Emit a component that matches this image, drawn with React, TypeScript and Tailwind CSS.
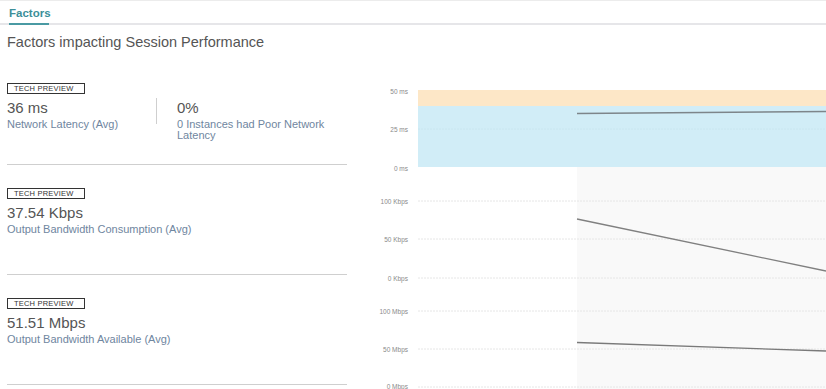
import React from 'react';

const font = { fontFamily: '"Liberation Sans", Arial, sans-serif' };

interface Metric {
  value: string;
  label: string;
}

const TechBadge = () => (
  <div className="w-[78px] h-[11px] border border-[#333] flex items-center pl-[6px] text-[7.5px] leading-none text-[#333] tracking-[0.2px]">
    TECH PREVIEW
  </div>
);

const MetricBlock = ({ value, label }: Metric) => (
  <div className="flex flex-col">
    <div className="text-[15px] leading-[18px] text-[#555] mt-[5px]">{value}</div>
    <div className="text-[11px] leading-[11px] text-[#6f86a0] mt-[2px]">{label}</div>
  </div>
);

const Section = ({ children, first }: { children: React.ReactNode; first?: boolean }) => (
  <div className={`${first ? 'h-[106px] pt-[24px]' : 'h-[110px] pt-[23px]'} border-b border-[#cfcfcf] flex flex-col`}>
    <TechBadge />
    {children}
  </div>
);

const Chart = () => {
  const axis = (y: number, text: string) => (
    <text x={408} y={y + 2.5} textAnchor="end" fontSize="6.5" fill="#8a8a8a" fontFamily="Liberation Sans, Arial, sans-serif">
      {text}
    </text>
  );
  const grid = (y: number) => (
    <line x1={418} x2={826} y1={y} y2={y} stroke="#e6e6e6" strokeWidth="1" strokeDasharray="2 1" />
  );
  return (
    <svg width="471" height="309" viewBox="355 80 471 309" className="block">
      <rect x={577} y={167} width={249} height={222} fill="#f9f9f9" />
      <rect x={418} y={90} width={408} height={16} fill="#fde7c7" />
      <rect x={418} y={106} width={408} height={61} fill="#d1edf7" />
      <line x1={418} x2={826} y1={129} y2={129} stroke="#c9e6f0" strokeWidth="1" strokeDasharray="2 1" />
      <line x1={577} y1={113.5} x2={826} y2={111.5} stroke="#7d858a" strokeWidth="1.5" />
      {axis(91, '50 ms')}
      {axis(129, '25 ms')}
      {axis(168, '0 ms')}

      {grid(201)}
      {grid(239)}
      {grid(278)}
      {axis(201, '100 Kbps')}
      {axis(239, '50 Kbps')}
      {axis(278, '0 Kbps')}
      <line x1={577} y1={219} x2={826} y2={271} stroke="#808080" strokeWidth="1.3" />

      {grid(311)}
      {grid(349)}
      {grid(387)}
      {axis(311, '100 Mbps')}
      {axis(349, '50 Mbps')}
      {axis(386.5, '0 Mbps')}
      <line x1={577} y1={342.5} x2={826} y2={351} stroke="#7a7a7a" strokeWidth="1.3" />
    </svg>
  );
};

export default function App() {
  return (
    <div className="w-[826px] h-[389px] bg-white overflow-hidden border-t border-[#ececec]" style={font}>
      <div className="h-[24px] border-b-2 border-[#e6e6e9] flex">
        <div className="ml-[9px] w-[40px] border-b-2 border-[#4a9aa3] -mb-[2px] text-[11.5px] font-bold text-[#3c8f99] pt-[5px] leading-[14px]">
          Factors
        </div>
      </div>
      <div className="pl-[7px] pt-[8px] text-[14.5px] leading-[18px] text-[#555]">Factors impacting Session Performance</div>
      <div className="flex mt-[8px]">
        <div className="w-[347px] pl-[7px] shrink-0">
          <Section first>
            <div className="flex">
              <div className="w-[149px]">
                <MetricBlock value="36 ms" label="Network Latency (Avg)" />
              </div>
              <div className="w-px h-[26px] bg-[#cfcfcf] mt-[4px]" />
              <div className="pl-[20px] w-[170px]">
                <MetricBlock value="0%" label="0 Instances had Poor Network Latency" />
              </div>
            </div>
          </Section>
          <Section>
            <MetricBlock value="37.54 Kbps" label="Output Bandwidth Consumption (Avg)" />
          </Section>
          <Section>
            <MetricBlock value="51.51 Mbps" label="Output Bandwidth Available (Avg)" />
          </Section>
        </div>
        <div className="ml-[8px] mt-[21px]">
          <Chart />
        </div>
      </div>
    </div>
  );
}
